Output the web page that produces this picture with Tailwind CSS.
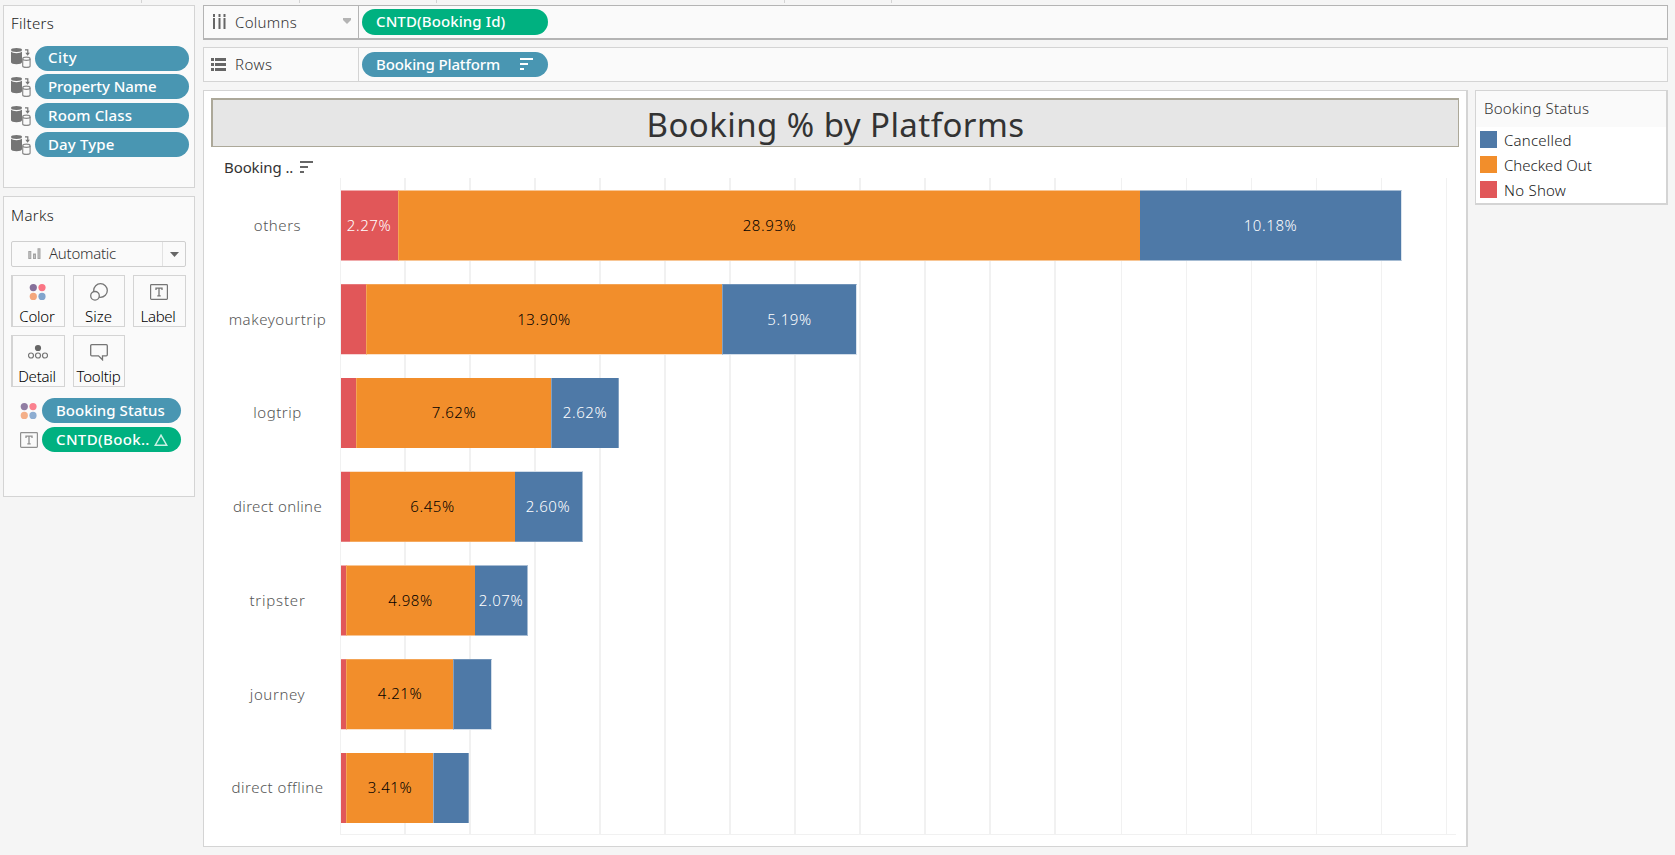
<!DOCTYPE html>
<html lang="en">
<head>
<meta charset="utf-8">
<title>Booking % by Platforms</title>
<script src="https://cdn.jsdelivr.net/npm/@tailwindcss/browser@4"></script>
</head>
<body class="relative flex h-[855px] w-[1675px] overflow-hidden bg-[#f5f5f5] pt-[5px] pl-[3px] font-['Noto_Sans',sans-serif] text-[15px] leading-5 font-light whitespace-nowrap text-[#333]">

<svg class="hidden">
  <symbol id="db" viewBox="0 0 20 20">
    <path d="M0 3.6v10.6c0 1.2 2.5 2 5.5 2s5.500-.8 5.500-2V3.600c-1 1.100-3 1.600-5.500 1.600S1 4.700 0 3.600z" fill="#757575"/>
    <ellipse cx="5.500" cy="2" rx="5.500" ry="1.900" fill="#757575"/>
    <path d="M14 1.800h2.800v4" fill="none" stroke="#757575" stroke-width="1.200"/>
    <path d="M14.300 4.700h4.600l-2.300 3z" fill="#757575"/>
    <path d="M11.700 11v7c0 .8 1.600 1.400 3.700 1.400s3.700-.6 3.700-1.400v-7" fill="#fafafa" stroke="#8a8a8a" stroke-width="1.200"/>
    <ellipse cx="15.400" cy="10.700" rx="3.700" ry="1.600" fill="#fafafa" stroke="#8a8a8a" stroke-width="1.200"/>
  </symbol>
  <symbol id="dots" viewBox="0 0 18 18">
    <circle cx="4.300" cy="4.600" r="3.600" fill="#86709a"/><circle cx="13" cy="4.600" r="3.600" fill="#fa7584"/>
    <circle cx="4.300" cy="13.400" r="3.600" fill="#f4a77c"/><circle cx="13" cy="13.400" r="3.600" fill="#82a5cd"/>
  </symbol>
  <symbol id="tbox" viewBox="0 0 18 16">
    <rect x=".6" y=".6" width="16.800" height="14.800" rx=".8" fill="none" stroke="currentColor" stroke-width="1.200"/>
    <path d="M6 6V4.200h6V6M9 4.200v7.600M7.300 11.800h3.400" fill="none" stroke="currentColor" stroke-width="1.300"/>
  </symbol>
  <symbol id="sort" viewBox="0 0 13 12">
    <path d="M0 0h13v2H0zM0 5h8v2H0zM0 10h4v2H0z" fill="currentColor"/>
  </symbol>
</svg>

<div class="absolute top-0 left-0 h-[3px] w-full">
  <i class="absolute left-[141px] h-[3px] w-px bg-[#d4d4d4]"></i>
  <i class="absolute left-[299px] h-[3px] w-px bg-[#d4d4d4]"></i>
  <i class="absolute left-[436px] h-[3px] w-px bg-[#d4d4d4]"></i>
  <i class="absolute left-[784px] h-[3px] w-px bg-[#d4d4d4]"></i>
  <i class="absolute left-[891px] h-[3px] w-px bg-[#d4d4d4]"></i>
</div>

<!-- Side cards -->
<aside class="flex w-[200px] flex-none flex-col gap-2">
  <section class="h-[183px] w-[192px] border border-[#d4d4d4] bg-[#fafafa] pt-[7px] pl-[7px]">
    <h2 class="mb-[12.700px] tracking-[0.3px] text-[#222]">Filters</h2>
    <div class="flex flex-col gap-[3.8px] font-medium text-white">
      <div class="flex items-center gap-1"><svg class="h-5 w-5"><use href="#db"/></svg><div class="flex h-[25px] w-[154px] items-center rounded-full bg-[#4996b2] pb-[2px] pl-[13px] tracking-[0.5px]">City</div></div>
      <div class="flex items-center gap-1"><svg class="h-5 w-5"><use href="#db"/></svg><div class="flex h-[25px] w-[154px] items-center rounded-full bg-[#4996b2] pb-[2px] pl-[13px] tracking-[-0.05px]">Property Name</div></div>
      <div class="flex items-center gap-1"><svg class="h-5 w-5"><use href="#db"/></svg><div class="flex h-[25px] w-[154px] items-center rounded-full bg-[#4996b2] pb-[2px] pl-[13px] tracking-[0.15px]">Room Class</div></div>
      <div class="flex items-center gap-1"><svg class="h-5 w-5"><use href="#db"/></svg><div class="flex h-[25px] w-[154px] items-center rounded-full bg-[#4996b2] pb-[2px] pl-[13px] tracking-[0.15px]">Day Type</div></div>
    </div>
  </section>

  <section class="h-[301px] w-[192px] border border-[#d4d4d4] bg-[#fafafa] pt-2 pl-[7px]">
    <h2 class="mb-4 tracking-[0.3px] text-[#222]">Marks</h2>
    <div class="mb-2 flex h-[26px] w-[175px] items-center rounded-[2px] border border-[#cfcfcf] bg-[#fafafa]">
      <svg class="ml-4 h-3 w-[13px]" viewBox="0 0 13 12"><g fill="#c4c4c4" stroke="#a3a3a3"><rect x=".8" y="3.500" width="2" height="7"/><rect x="5.500" y="6" width="2" height="4.500"/><rect x="10" y=".8" width="2" height="9.700"/></g></svg>
      <span class="ml-2 flex-1 pb-[2px] tracking-[-0.25px]">Automatic</span>
      <span class="h-full w-px bg-[#e2e2e2]"></span>
      <span class="flex w-[22px] items-center justify-center"><svg class="h-[5px] w-[9px]" viewBox="0 0 9 5"><path d="M0 0h9L4.500 5z" fill="#666"/></svg></span>
    </div>
    <div class="grid grid-cols-[54px_52px_53px] gap-x-2 gap-y-2 text-black">
      <div class="flex h-[52px] flex-col items-center border border-l-2 border-[#d4d4d4] pt-[7px]"><svg class="mr-[2px] h-[18px] w-[18px]"><use href="#dots"/></svg><span class="mt-[5px] mr-[3px] tracking-[-0.2px]">Color</span></div>
      <div class="flex h-[52px] flex-col items-center border border-[#d4d4d4] pt-[7px]"><svg class="h-[18px] w-[18px]" viewBox="0 0 18 18"><g fill="#fafafa" stroke="#757575" stroke-width="1.300"><circle cx="10.500" cy="7.500" r="6.800"/><circle cx="5" cy="12.800" r="4.300"/></g></svg><span class="mt-[5px] mr-px">Size</span></div>
      <div class="flex h-[52px] flex-col items-center border border-[#d4d4d4] pt-[8px] text-[#757575]"><svg class="mr-px h-4 w-[18px]"><use href="#tbox"/></svg><span class="mt-[6px] mr-[3px] tracking-[-0.35px] text-black">Label</span></div>
      <div class="flex h-[52px] flex-col items-center border border-l-2 border-[#d4d4d4] pt-[8px]"><svg class="mr-[2px] h-[15px] w-5" viewBox="0 0 20 15"><circle cx="10" cy="4" r="3.100" fill="#666"/><g fill="none" stroke="#757575" stroke-width="1.200"><circle cx="3" cy="11.500" r="2.500"/><circle cx="10" cy="11.500" r="2.500"/><circle cx="17" cy="11.500" r="2.500"/></g></svg><span class="mt-[7px] mr-[3px] tracking-[-0.25px]">Detail</span></div>
      <div class="flex h-[52px] flex-col items-center border border-[#d4d4d4] pt-[8px]"><svg class="h-[17px] w-[18px]" viewBox="0 0 18 17"><path d="M1.700.700h14.600a1 1 0 0 1 1 1v9.100a1 1 0 0 1-1 1h-3.800v4l-4-4H1.700a1 1 0 0 1-1-1V1.700a1 1 0 0 1 1-1z" fill="none" stroke="#757575" stroke-width="1.300"/></svg><span class="mt-[5px] mr-px tracking-[-0.25px]">Tooltip</span></div>
    </div>
    <div class="mt-[11px] flex flex-col gap-1 pl-[9px] font-medium text-white">
      <div class="flex items-center gap-1"><svg class="h-[18px] w-[18px] opacity-90"><use href="#dots"/></svg><div class="flex h-[25px] w-[139px] items-center rounded-full bg-[#4996b2] pb-[2px] pl-[14px] tracking-[0.05px]">Booking Status</div></div>
      <div class="flex items-center gap-1 text-[#909090]"><svg class="h-4 w-[18px]"><use href="#tbox"/></svg><div class="flex h-[25px] w-[139px] items-center rounded-full bg-[#00b180] pb-[2px] pl-[14px] tracking-[0.35px] text-white">CNTD(Book..<svg class="mt-[2px] ml-[4px] h-3 w-[14px]" viewBox="0 0 14 12"><path d="M7 1.200 12.700 11.200H1.300z" fill="none" stroke="#c9f0e3" stroke-width="1.500"/></svg></div></div>
    </div>
  </section>
</aside>

<div class="flex w-[1465px] flex-none flex-col">
  <!-- Columns shelf -->
  <div class="mb-[7px] flex h-[35px] border border-b-2 border-[#b4b4b4] bg-[#fafafa]">
    <div class="flex w-[155px] items-center border-r border-[#b4b4b4] pl-[9px]">
      <svg class="mb-[2px] h-[15px] w-[13px]" viewBox="0 0 13 15"><path d="M0 0h2v3H0zM0 4h2v11H0zM5.500 0h2v3h-2zM5.500 4h2v11h-2zM10.500 0h2v3h-2zM10.500 4h2v11h-2z" fill="#666"/></svg>
      <span class="ml-[9px] flex-1 tracking-[0.3px]">Columns</span>
      <svg class="mr-[7px] mb-[2px] h-[6px] w-2" viewBox="0 0 8 6"><path d="M0 0h8v2L4 6 0 2z" fill="#b4b4b4"/></svg>
    </div>
    <div class="mt-[3px] ml-[3px] flex h-[26px] w-[186px] items-center rounded-full bg-[#00b180] pb-[2px] pl-[14px] font-medium tracking-[0.1px] text-white">CNTD(Booking Id)</div>
  </div>
  <!-- Rows shelf -->
  <div class="mb-2 flex h-[35px] border border-[#d4d4d4] bg-[#fafafa]">
    <div class="flex w-[155px] items-center border-r border-[#d4d4d4] pl-[7px]">
      <svg class="mb-px h-[13px] w-[15px]" viewBox="0 0 15 13"><path d="M0 0h3v3H0zM4 0h11v3H4zM0 5h3v3H0zM4 5h11v3H4zM0 10h3v3H0zM4 10h11v3H4z" fill="#666"/></svg>
      <span class="ml-[9px] pb-px tracking-[0.5px]">Rows</span>
    </div>
    <div class="mt-1 ml-[3px] flex h-[25px] w-[186px] items-center rounded-full bg-[#4996b2] pb-[2px] pl-[14px] font-medium tracking-[-0.1px] text-white">Booking Platform<svg class="mt-px ml-[20px] h-3 w-[13px]"><use href="#sort"/></svg></div>
  </div>

  <div class="flex items-start gap-[7px]">
    <!-- Worksheet view -->
    <main class="h-[757px] w-[1265px] border border-r-2 border-[#d4d4d4] bg-white pt-[7px] pl-[7px]">
      <h1 class="flex h-[49px] w-[1248px] items-center justify-center border-t-2 border-r border-b border-l-2 border-[#aca899] bg-[#e6e6e6] pt-[2px] text-[33px] leading-none font-normal tracking-[0.43px] text-[#333]"><span>Booking % by Platforms</span></h1>
      <div class="flex h-[31px] items-center pt-[9px] pl-[13px] font-normal"><span class="pb-px tracking-[-0.1px]">Booking ..</span><svg class="ml-[7px] h-3 w-[13px] text-[#666]"><use href="#sort"/></svg></div>
      <div class="flex">
        <div class="flex w-[129px] flex-col gap-[23px] pt-[11px] pl-[4px] text-center text-[#555]">
          <div class="flex h-[71px] items-center justify-center tracking-[0.55px]">others</div>
          <div class="flex h-[71px] items-center justify-center tracking-[0.55px]">makeyourtrip</div>
          <div class="flex h-[70px] items-center justify-center tracking-[0.5px]">logtrip</div>
          <div class="flex h-[71px] items-center justify-center tracking-[0.35px]">direct online</div>
          <div class="flex h-[71px] items-center justify-center tracking-[0.8px]">tripster</div>
          <div class="flex h-[71px] items-center justify-center tracking-[0.6px]">journey</div>
          <div class="flex h-[70px] items-center justify-center tracking-[0.5px]">direct offline</div>
        </div>
        <div class="relative h-[657px] w-[1116px] border-b border-l border-[#f1f1f1] pt-3">
          <svg class="absolute top-0 left-0 h-[656px] w-[1115px]" viewBox="0 0 1115 656"><path fill="#f1f1f1" d="M63 0h2v656h-2zM128 0h2v656h-2zM193 0h2v656h-2zM258 0h2v656h-2zM323 0h2v656h-2zM388 0h2v656h-2zM453 0h2v656h-2zM518 0h2v656h-2zM583 0h2v656h-2zM648 0h2v656h-2zM713 0h2v656h-2zM780 0h1v656h-1zM845 0h1v656h-1zM910 0h1v656h-1zM975 0h1v656h-1zM1040 0h1v656h-1zM1105 0h1v656h-1z"/></svg>
          <div class="relative flex flex-col gap-[23px] tracking-[0.6px] text-white">
            <div class="flex h-[71px]">
              <div class="flex w-[57px] items-center justify-center border-y border-white/50 bg-[#e15759] pr-px pb-[2px]">2.27%</div>
              <div class="flex w-[742px] items-center justify-center border-y border-l border-y-white/50 border-l-white/20 bg-[#f28e2b] pb-[2px] font-[350] text-black">28.93%</div>
              <div class="flex w-[262px] items-center justify-center border-y border-r border-y-white/50 border-r-white/80 bg-[#4e79a7] pb-[2px]">10.18%</div>
            </div>
            <div class="flex h-[71px]">
              <div class="w-[25px] border-t border-b border-t-white/20 border-b-white/75 bg-[#e15759]"></div>
              <div class="flex w-[356px] items-center justify-center border-t border-b border-l border-t-white/20 border-b-white/75 border-l-white/20 bg-[#f28e2b] pr-px pb-[2px] font-[350] text-black">13.90%</div>
              <div class="flex w-[135px] items-center justify-center border border-t-white/20 border-r-white/80 border-b-white/75 border-l-white/30 bg-[#4e79a7] pb-[2px]">5.19%</div>
            </div>
            <div class="flex h-[70px]">
              <div class="w-[15px] bg-[#e15759]"></div>
              <div class="flex w-[195px] items-center justify-center border-l border-white/20 bg-[#f28e2b] pb-[2px] font-[350] text-black">7.62%</div>
              <div class="flex w-[68px] items-center justify-center border-x border-white/30 bg-[#4e79a7] pb-[2px]">2.62%</div>
            </div>
            <div class="flex h-[71px]">
              <div class="w-[9px] border-t border-b border-t-white/75 border-b-white/25 bg-[#e15759]"></div>
              <div class="flex w-[165px] items-center justify-center border-t border-b border-t-white/75 border-b-white/25 bg-[#f28e2b] pb-[2px] font-[350] text-black">6.45%</div>
              <div class="flex w-[68px] items-center justify-center border-t border-r border-b border-t-white/75 border-r-white/50 border-b-white/25 bg-[#4e79a7] pr-px pb-[2px]">2.60%</div>
            </div>
            <div class="flex h-[71px]">
              <div class="w-[5px] border-y border-white/50 bg-[#e15759]"></div>
              <div class="flex w-[129px] items-center justify-center border-y border-l border-y-white/50 border-l-white/20 bg-[#f28e2b] pr-px pb-[2px] font-[350] text-black">4.98%</div>
              <div class="flex w-[53px] items-center justify-center border-y border-r border-white/50 bg-[#4e79a7] pb-[2px]">2.07%</div>
            </div>
            <div class="flex h-[71px]">
              <div class="w-[5px] border-t border-b border-t-white/20 border-b-white/75 bg-[#e15759]"></div>
              <div class="flex w-[107px] items-center justify-center border-t border-b border-l border-t-white/20 border-b-white/75 border-l-white/20 bg-[#f28e2b] pb-[3px] font-[350] text-black">4.21%</div>
              <div class="w-[39px] border border-t-white/20 border-r-white/75 border-b-white/75 border-l-white/30 bg-[#4e79a7]"></div>
            </div>
            <div class="flex h-[70px]">
              <div class="w-[5px] bg-[#e15759]"></div>
              <div class="flex w-[87px] items-center justify-center border-l border-white/20 bg-[#f28e2b] pb-[2px] font-[350] text-black">3.41%</div>
              <div class="w-[36px] border-x border-l-white/40 border-r-white/30 bg-[#4e79a7]"></div>
            </div>
          </div>
        </div>
      </div>
    </main>

    <!-- Legend -->
    <section class="h-[115px] w-[193px] border border-r-2 border-b-2 border-[#d4d4d4] bg-white">
      <h2 class="flex h-9 items-center bg-[#fafafa] pb-[2px] pl-2 tracking-[0.2px]">Booking Status</h2>
      <div class="flex flex-col gap-2 pt-1 pl-1 text-[#222]">
        <div class="flex h-[17px] items-center gap-[7px] tracking-[0.2px]"><i class="h-[17px] w-[17px] bg-[#4e79a7]"></i>Cancelled</div>
        <div class="flex h-[17px] items-center gap-[7px]"><i class="h-[17px] w-[17px] bg-[#f28e2b]"></i>Checked Out</div>
        <div class="flex h-[17px] items-center gap-[7px] tracking-[0.25px]"><i class="h-[17px] w-[17px] bg-[#e15759]"></i>No Show</div>
      </div>
    </section>
  </div>
</div>
</body>
</html>
